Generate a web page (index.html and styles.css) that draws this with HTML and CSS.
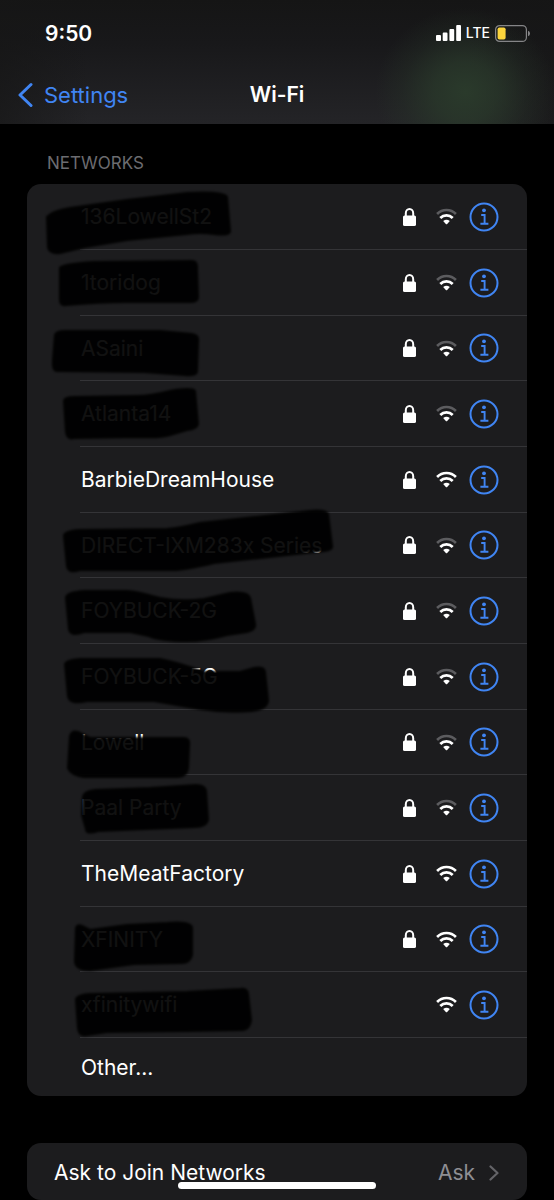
FILE: index.html
```html
<!DOCTYPE html>
<html lang="en">
<head>
<meta charset="utf-8">
<meta name="viewport" content="width=device-width, initial-scale=1">
<title>Wi-Fi</title>
<link rel="stylesheet" href="styles.css">
</head>
<body>
<svg class="sprite" aria-hidden="true">
  <symbol id="lock" viewBox="0 0 13 18">
    <path d="M2.800 9V5.200a3.700 4.200 0 0 1 7.400 0V9" fill="none" stroke="currentColor" stroke-width="2"/>
    <rect x="0" y="7.400" width="13" height="10.600" rx="1.600" fill="currentColor"/>
  </symbol>
  <symbol id="wifi-inner" viewBox="0 0 21 17">
    <path d="M4.300 9.900a8.900 8.900 0 0 1 12.400 0" fill="none" stroke="currentColor" stroke-width="2.800"/>
    <path d="M7.200 13q3.300-2.600 6.600 0l-2.600 2.900q-.7.7-1.400 0z" fill="currentColor"/>
  </symbol>
  <symbol id="wifi-outer" viewBox="0 0 21 17">
    <path d="M1.100 6a13 13 0 0 1 18.800 0" fill="none" stroke="currentColor" stroke-width="2.600"/>
  </symbol>
  <symbol id="info" viewBox="0 0 30 30">
    <circle cx="15" cy="15" r="13.500" fill="none" stroke="currentColor" stroke-width="2"/>
    <circle cx="15" cy="8.300" r="1.900" fill="currentColor"/>
    <path d="M12.200 13h3.400v8.800M11.400 21.800h8" fill="none" stroke="currentColor" stroke-width="1.900"/>
  </symbol>
</svg>

<header class="top">
  <div class="status">
    <time class="clock">9:50</time>
    <div class="indicators">
      <svg class="signal" viewBox="0 0 25 16" aria-hidden="true"><path d="M1 10h3q1 0 1 1v4q0 1-1 1H1q-1 0-1-1v-4q0-1 1-1zM7.700 7.500h2.800q1 0 1 1V15q0 1-1 1H7.700q-1 0-1-1V8.500q0-1 1-1zM14.400 4h2.800q1 0 1 1v10q0 1-1 1h-2.800q-1 0-1-1V5q0-1 1-1zM21.200 0H24q1 0 1 1v14q0 1-1 1h-2.800q-1 0-1-1V1q0-1 1-1z" fill="#fff"/></svg>
      <span class="carrier">LTE</span>
      <svg class="battery" viewBox="0 0 36 17" aria-hidden="true"><rect x=".6" y=".6" width="30.800" height="15.800" rx="4" fill="none" stroke="#858587" stroke-width="1.200"/><rect x="2.600" y="2.500" width="8" height="12" rx="1.800" fill="#fbd43c"/><path d="M33 5.800q2 .6 2 2.700t-2 2.700z" fill="#858587"/></svg>
    </div>
  </div>
  <nav class="nav">
    <a class="back" href="#settings"><svg class="back-icon" viewBox="0 0 16 26" aria-hidden="true"><path d="M13 2.500 2 13l11 10.500" fill="none" stroke="currentColor" stroke-width="3" stroke-linecap="round" stroke-linejoin="round"/></svg>Settings</a>
    <h1 class="title">Wi-Fi</h1>
  </nav>
</header>

<main class="content">
  <h2 class="label">NETWORKS</h2>
  <section class="card networks">
    <ul class="list" id="list"></ul>
    <button class="other" type="button">Other...</button>
    <svg class="marker" viewBox="27 184 500 912" aria-hidden="true">
      <path d="M47 217Q52 211 70 208L127 200 187 193Q224 191 227 197L230 231Q230 236 214 234 200 232 187 234L127 240 85 247 60 253Q49 254 48 247Z"/>
      <path d="M60 268Q60 264 94 262L192 261Q198 261 197 270L198 297Q198 302 190 302L127 302Q100 302 66 305 60 306 60 300Z"/>
      <path d="M55 335Q56 331 65 331L160 331 192 334Q199 335 198 341L197 371Q197 376 185 375L144 372 57 371Q52 371 53 360Z"/>
      <path d="M64 401Q64 397 75 397L137 396Q150 396 170 391 192 387 195 391L198 424Q197 429 187 430L170 435Q160 438 140 437L74 438Q67 440 66 432Z"/>
      <path d="M64 536Q64 531 80 530L167 529Q180 528 200 523L300 512Q326 508 328 514L332 546Q333 550 324 551L214 563Q185 570 174 570L80 570Q68 574 67 566Z"/>
      <path d="M66 598Q66 592 85 591L127 591Q135 591 160 598 182 602 204 599L230 593Q248 591 250 598L255 624Q256 630 247 632L227 635Q205 641 187 641 160 641 149 636L130 632 84 632Q70 637 69 629Z"/>
      <path d="M65 664Q66 660 80 659L160 659Q180 663 204 672L240 672 254 668Q264 666 265 672L268 700Q268 709 252 711 225 713 200 709L154 701 87 701Q69 705 68 696Z"/>
      <path d="M70 736Q72 730 78 732L90 738 184 738Q190 738 189 745L188 768Q187 777 178 777L84 777Q71 775 68 768Z"/>
      <path d="M83 797Q84 791 95 790L150 788 196 785Q205 785 206 791L208 820Q206 827 195 827L98 831Q86 835 86 829L82 815Z"/>
      <path d="M76 928Q77 924 82 926L90 930 127 925 167 923Q192 921 192 928L192 955Q190 963 182 963L134 964 90 970Q75 970 75 961Z"/>
      <path d="M76 1000Q76 995 90 994L187 992 240 989Q248 988 248 994L251 1020Q250 1029 243 1030L187 1031 107 1032 87 1035Q79 1037 78 1028Z"/>
    </svg>
  </section>
  <section class="card">
    <a class="ask" href="#ask-to-join"><span class="ask-name">Ask to Join Networks</span><span class="ask-value">Ask</span><svg class="ask-icon" viewBox="0 0 10 16" aria-hidden="true"><path d="M1.500 1.500 8.500 8l-7 6.500" fill="none" stroke="currentColor" stroke-width="2.200" stroke-linecap="round" stroke-linejoin="round"/></svg></a>
  </section>
</main>
<div class="home-bar"></div>
<script src="networks.js"></script>
</body>
</html>
```
FILE: styles.css
```css
* { box-sizing: border-box; }

body {
  margin: 0;
  background: #000;
  color: #fff;
  font-family: Inter, "Liberation Sans", sans-serif;
  font-size: 21px;
  line-height: 28px;
}

button, a {
  font: inherit;
  color: inherit;
  text-decoration: none;
}

button {
  border: 0;
  padding: 0;
  background: none;
  text-align: left;
}

svg { display: block; }

.sprite {
  position: absolute;
  width: 0;
  height: 0;
}

.top {
  background:
    radial-gradient(ellipse 90px 84px at 84% 74%, #2a3a2b, #2a3a2bbb 35%, #2a3a2b44 70%, #2a3a2b00),
    linear-gradient(90deg, #161616aa, #16161600 16%, #16161600 84%, #161616aa),
    linear-gradient(#151515, #18181a 35%, #242427);
}

.status {
  display: flex;
  align-items: center;
  justify-content: space-between;
  height: 66px;
  padding: 0 23px 0 45px;
}

.clock { padding-top: 1px; font-weight: 600; }

.indicators {
  display: flex;
  align-items: center;
  gap: 5px;
}

.signal { width: 25px; height: 16px; }
.carrier { font-size: 14px; font-weight: 500; }
.battery { width: 36px; height: 17px; }

.nav {
  display: grid;
  grid-template-columns: 1fr auto 1fr;
  align-items: center;
  height: 58px;
  padding: 0 18px 1px;
}

.back {
  display: flex;
  align-items: center;
  gap: 10px;
  color: #4085f3;
  font-size: 22px;
}

.back-icon { width: 16px; height: 26px; }

.title {
  margin: 0;
  font-size: 21px;
  font-weight: 600;
}

.content { padding: 28px 27px 0; }

.label {
  margin: 0 0 10px;
  padding-left: 20px;
  color: #6c6c70;
  font-size: 17px;
  font-weight: 400;
  line-height: 22px;
}

.card {
  border-radius: 14px;
  background: #1c1c1e;
}

.networks {
  position: relative;
  margin-bottom: 47px;
}

.list {
  margin: 0;
  padding: 0;
  list-style: none;
}

.network {
  display: flex;
  align-items: center;
  height: 66px;
  margin-left: 53px;
  padding: 0 28px 0 1px;
  border-bottom: 1px solid #343437;
}

.network:nth-child(3n) { height: 65px; }

.network-name { flex: 1; padding-top: 1px; }
.lock { width: 13px; height: 18px; margin-right: 20px; }

.wifi {
  width: 21px;
  height: 17px;
  margin-right: 12px;
}

.weak .outer { color: #5c5c5f; }

.info { color: #4085f3; }
.info svg { width: 30px; height: 30px; }

.other {
  display: block;
  width: 100%;
  height: 58px;
  padding: 2px 0 0 54px;
}

.marker {
  position: absolute;
  top: 0;
  left: 0;
  width: 500px;
  height: 912px;
  overflow: visible;
  pointer-events: none;
  fill: #000;
  stroke: #000;
  stroke-width: 2;
  stroke-linejoin: round;
  opacity: 0.93;
  filter: blur(1px);
}

.ask {
  display: flex;
  align-items: center;
  height: 57px;
  padding: 3px 28px 0 27px;
}

.ask-name { flex: 1; }
.ask-value { color: #8e8e93; margin-right: 14px; }
.ask-icon { width: 10px; height: 16px; color: #646468; }

.home-bar {
  position: fixed;
  bottom: 11px;
  left: 50%;
  width: 198px;
  height: 7px;
  margin-left: -99px;
  border-radius: 4px;
  background: #fff;
}
```
FILE: networks.js
```js
const networks = [
  { name: "136LowellSt2", locked: true, weak: true },
  { name: "1toridog", locked: true, weak: true },
  { name: "ASaini", locked: true, weak: true },
  { name: "Atlanta14", locked: true, weak: true },
  { name: "BarbieDreamHouse", locked: true, weak: false },
  { name: "DIRECT-IXM283x Series", locked: true, weak: true },
  { name: "FOYBUCK-2G", locked: true, weak: true },
  { name: "FOYBUCK-5G", locked: true, weak: true },
  { name: "Lowell", locked: true, weak: true },
  { name: "Paal Party", locked: true, weak: true },
  { name: "TheMeatFactory", locked: true, weak: false },
  { name: "XFINITY", locked: true, weak: false },
  { name: "xfinitywifi", locked: false, weak: false }
];

document.getElementById("list").innerHTML = networks.map(n => `
  <li class="network">
    <button class="network-name" type="button">${n.name}</button>
    ${n.locked ? '<svg class="lock" aria-hidden="true"><use href="#lock"/></svg>' : ""}
    <svg class="wifi${n.weak ? " weak" : ""}" aria-hidden="true"><use class="outer" href="#wifi-outer"/><use href="#wifi-inner"/></svg>
    <button class="info" type="button" aria-label="Details for ${n.name}"><svg aria-hidden="true"><use href="#info"/></svg></button>
  </li>`).join("");
```
